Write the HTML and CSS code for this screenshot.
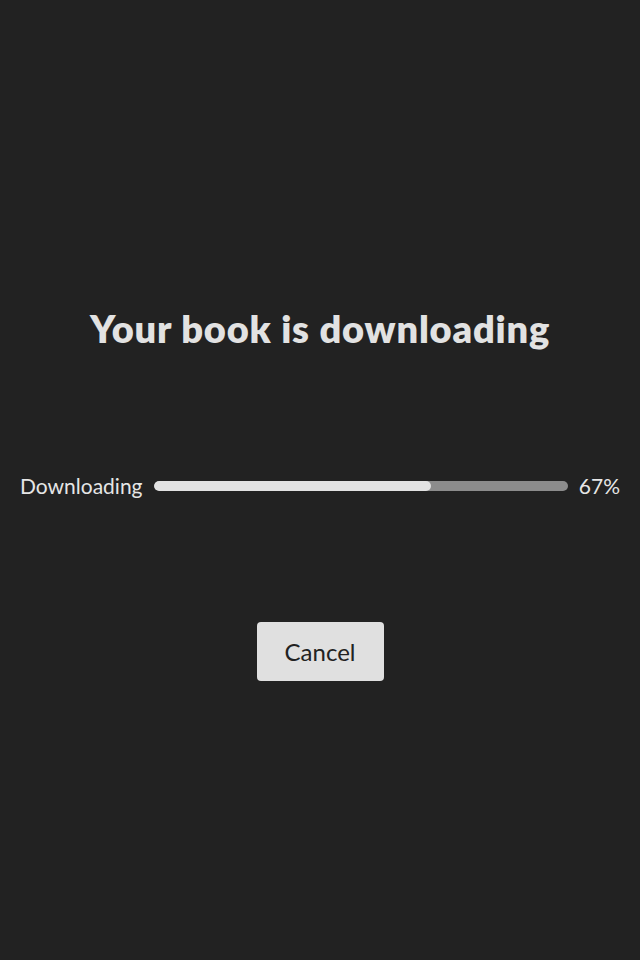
FILE: index.html
```html
<!DOCTYPE html>
<html>
<head>
<meta charset="utf-8">
<link rel="stylesheet" href="styles.css">
</head>
<body>
<main class="screen">
  <h1 class="title">Your book is downloading</h1>
  <div class="progress-row">
    <span class="label">Downloading</span>
    <div class="track"><div class="fill" style="width:67%"></div></div>
    <span class="percent">67%</span>
  </div>
  <button class="cancel">Cancel</button>
</main>
</body>
</html>
```
FILE: styles.css
```css
html, body {
  margin: 0;
  padding: 0;
  background: #222222;
  width: 640px;
  height: 960px;
  font-family: Lato, "Noto Sans", sans-serif;
}
.screen {
  display: flex;
  flex-direction: column;
  align-items: center;
  padding: 306px 20px 0;
}
.title {
  margin: 0;
  font-size: 38px;
  line-height: 44px;
  font-weight: 800;
  color: #e2e2e2;
  letter-spacing: 0.8px;
}
.progress-row {
  margin-top: 124px;
  align-self: stretch;
  display: flex;
  align-items: center;
  gap: 11px;
  height: 24px;
}
.label, .percent {
  font-size: 21px;
  color: #e6e6e6;
  line-height: 24px;
}
.track {
  flex: 1;
  height: 10px;
  border-radius: 5px;
  background: #8c8c8c;
  overflow: hidden;
}
.fill {
  height: 100%;
  background: #e2e2e2;
  border-radius: 5px;
}
.cancel {
  margin-top: 124px;
  width: 127px;
  height: 59px;
  border: none;
  border-radius: 4px;
  background: #e0e0e0;
  color: #222222;
  font-family: Lato, "Noto Sans", sans-serif;
  font-size: 24px;
  padding: 0;
}
```
